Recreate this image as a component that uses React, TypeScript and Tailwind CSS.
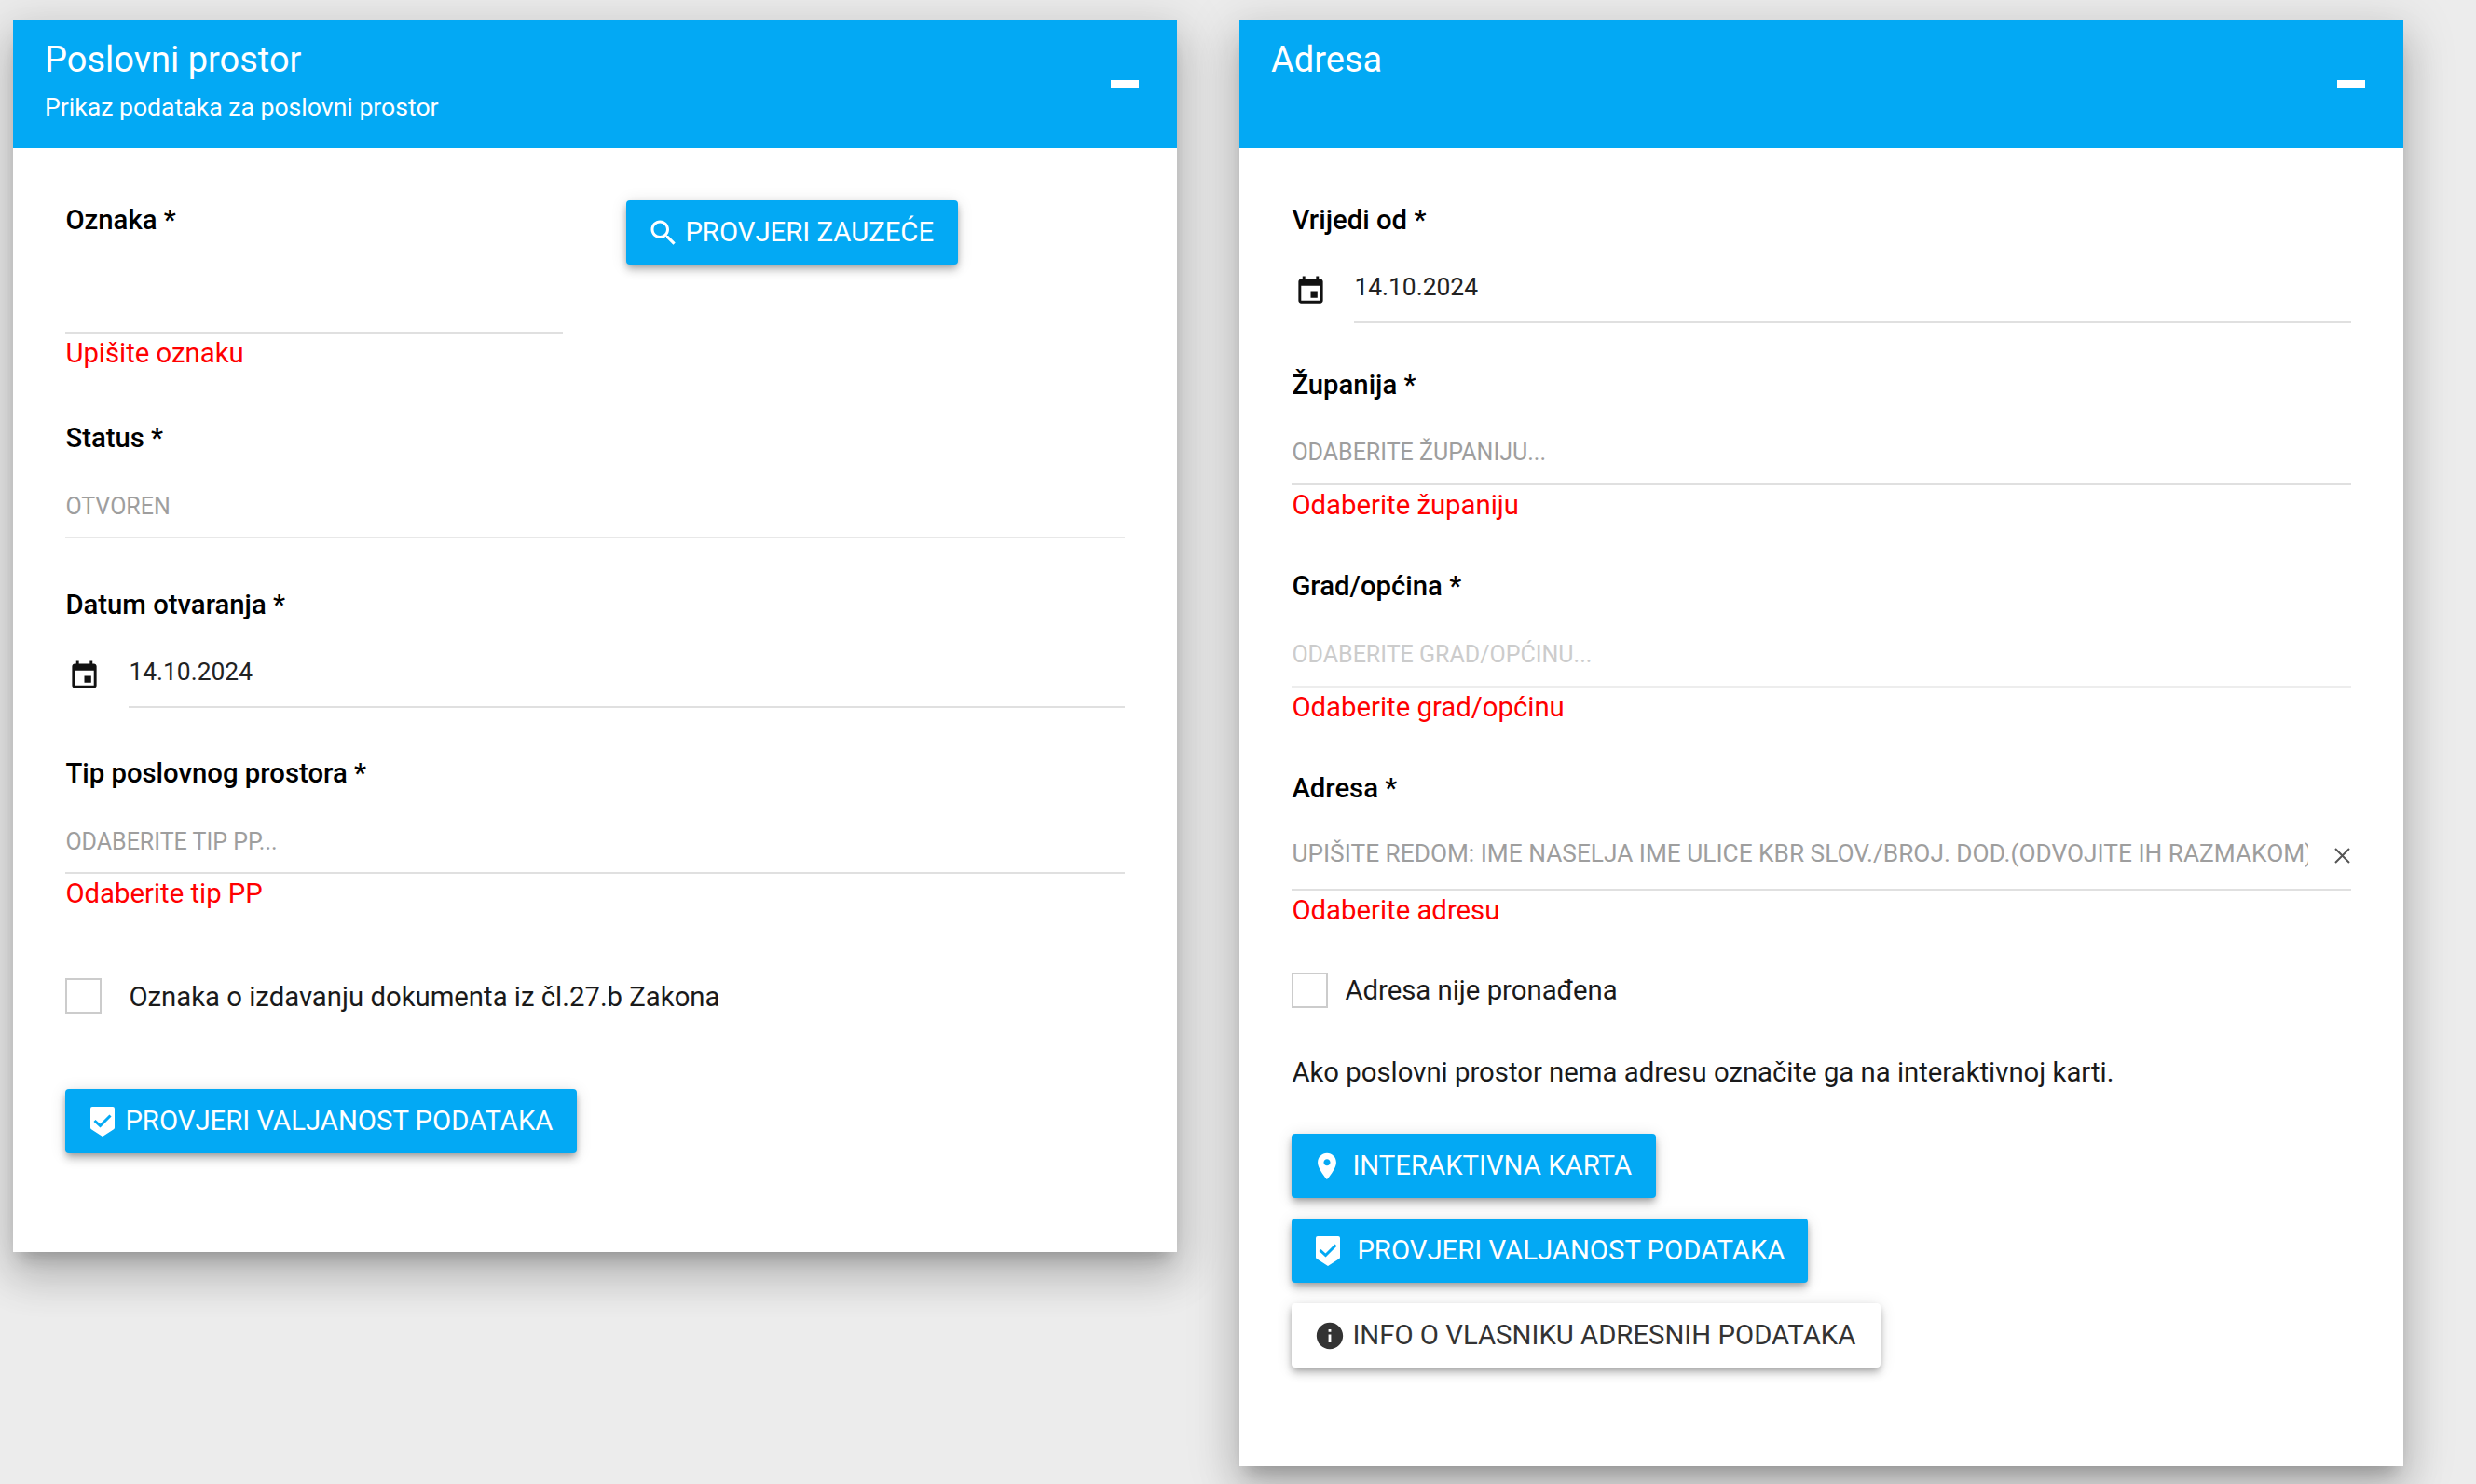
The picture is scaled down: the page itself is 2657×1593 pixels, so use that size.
import React from 'react';

const CARD_SHADOW = 'shadow-[0_27px_41px_3px_rgba(0,0,0,0.14),0_10px_51px_8px_rgba(0,0,0,0.12),0_14px_17px_-8px_rgba(0,0,0,0.2)]';
const BTN_SHADOW = 'shadow-[0_7px_8px_0_rgba(0,0,0,0.14),0_2px_17px_0_rgba(0,0,0,0.12),0_3px_7px_-2px_rgba(0,0,0,0.3)]';

const EventIcon = () => (
  <svg viewBox="0 0 24 24" className="h-[35px] w-[35px] fill-current">
    <path d="M17 12h-5v5h5v-5zM16 1v2H8V1H6v2H5c-1.11 0-1.99.9-1.99 2L3 19c0 1.1.89 2 2 2h14c1.1 0 2-.9 2-2V5c0-1.1-.9-2-2-2h-1V1h-2zm3 18H5V8h14v11z" />
  </svg>
);

const SearchIcon = () => (
  <svg viewBox="0 0 24 24" className="h-[36px] w-[36px] fill-current">
    <path d="M15.5 14h-.79l-.28-.27C15.41 12.59 16 11.11 16 9.5 16 5.91 13.09 3 9.5 3S3 5.91 3 9.5 5.91 16 9.5 16c1.61 0 3.09-.59 4.23-1.57l.27.28v.79l5 4.99L20.49 19l-4.99-5zm-6 0C7.01 14 5 11.99 5 9.5S7.01 5 9.5 5 14 7.01 14 9.5 11.99 14 9.5 14z" />
  </svg>
);

const PlaceIcon = () => (
  <svg viewBox="0 0 24 24" className="h-[34px] w-[34px] fill-current">
    <path d="M12 2C8.13 2 5 5.13 5 9c0 5.25 7 13 7 13s7-7.75 7-13c0-3.87-3.13-7-7-7zm0 9.5c-1.38 0-2.5-1.12-2.5-2.5s1.12-2.5 2.5-2.5 2.5 1.12 2.5 2.5-1.12 2.5-2.5 2.5z" />
  </svg>
);

const InfoIcon = () => (
  <svg viewBox="0 0 24 24" className="h-[34px] w-[34px] fill-current">
    <path d="M12 2C6.48 2 2 6.48 2 12s4.48 10 10 10 10-4.48 10-10S17.52 2 12 2zm1 15h-2v-6h2v6zm0-8h-2V7h2v2z" />
  </svg>
);

const ShieldIcon = () => (
  <svg viewBox="0 0 26 32" className="h-[32px] w-[26px]">
    <path d="M2 0h22a2 2 0 0 1 2 2v20.5a2 2 0 0 1-1 1.7L13 32 1 24.2a2 2 0 0 1-1-1.7V2a2 2 0 0 1 2-2z" fill="#fff" />
    <path d="M4.5 15l6 5.5L21.5 9.5" fill="none" stroke="#03a9f4" strokeWidth="3" />
  </svg>
);

const Label = ({ children, className = '' }: { children: React.ReactNode; className?: string }) => (
  <div className={`h-[40px] text-[29.3px] font-medium leading-[40px] text-black ${className}`}>{children}</div>
);

const ErrorText = ({ children }: { children: React.ReactNode }) => (
  <div className="mt-px h-[40px] text-[29.3px] leading-[40px] text-[#ff0000]">{children}</div>
);

const Checkbox = () => <div className="h-[38px] w-[39px] shrink-0 border-2 border-[#cccccc] bg-white" />;

const Card = ({ title, subtitle, children }: { title: string; subtitle?: string; children: React.ReactNode }) => (
  <section className={`w-[1249px] shrink-0 bg-white ${CARD_SHADOW}`}>
    <header className="flex h-[137px] items-center justify-between bg-[#03a9f4] pl-[34px] pr-[41px] text-white">
      <div className="self-start pt-[20px]">
        <h2 className="text-[38px] font-normal leading-[44px]">{title}</h2>
        {subtitle && <p className="mt-[9px] text-[26.6px] leading-[40px]">{subtitle}</p>}
      </div>
      <div className="mb-[2px] h-[8px] w-[30px] bg-white" />
    </header>
    <div className="pb-[106px] pl-[56.4px] pr-[55.6px] pt-[57px]">{children}</div>
  </section>
);

const Button = ({ children, light, className = '' }: { children: React.ReactNode; light?: boolean; className?: string }) => (
  <button
    type="button"
    className={`flex h-[69px] items-center rounded-[4px] text-[29.3px] leading-none ${BTN_SHADOW} ${light ? 'bg-white text-[#333333]' : 'bg-[#03a9f4] text-white'} ${className}`}
  >
    {children}
  </button>
);

export default function App() {
  return (
    <div className="flex min-h-[1593px] items-start gap-[67px] bg-[#ececec] pl-[14px] pt-[22px] font-['Roboto',sans-serif]">
      <Card title="Poslovni prostor" subtitle="Prikaz podataka za poslovni prostor">
        <div className="flex">
          <div className="w-[534px]">
            <Label>Oznaka *</Label>
            <div className="h-[102px] border-b-2 border-[#e0e0e0]" />
          </div>
          <div className="ml-[68px] -mt-px">
            <Button className="w-[356px] pl-[22px]">
              <SearchIcon />
              <span className="ml-[5px]">PROVJERI ZAUZEĆE</span>
            </Button>
          </div>
        </div>
        <ErrorText>Upišite oznaku</ErrorText>

        <Label className="mt-[51px]">Status *</Label>
        <div className="border-b-2 border-[#e8e8e8] pb-[12px] pt-[34px] text-[25px] leading-[40px] text-[#9e9e9e]">OTVOREN</div>

        <Label className="mt-[51px]">Datum otvaranja *</Label>
        <div className="flex">
          <div className="flex w-[68px] items-end pb-[17px] pl-[3px] text-[#111111]">
            <EventIcon />
          </div>
          <div className="flex-1 border-b-2 border-[#e0e0e0] pb-[17px] pt-[32px] text-[26.4px] leading-[40px] text-[#222222]">14.10.2024</div>
        </div>

        <Label className="mt-[50px]">Tip poslovnog prostora *</Label>
        <div className="border-b-2 border-[#e0e0e0] pb-[12px] pt-[34px] text-[25px] leading-[40px] text-[#9e9e9e]">ODABERITE TIP PP...</div>
        <ErrorText>Odaberite tip PP</ErrorText>

        <div className="mt-[69px] flex items-center gap-[29px]">
          <Checkbox />
          <span className="pt-[2px] text-[29.3px] leading-[40px] text-[#1a1a1a]">Oznaka o izdavanju dokumenta iz čl.27.b Zakona</span>
        </div>

        <Button className="mt-[79px] w-[549px] pl-[27px]">
          <ShieldIcon />
          <span className="ml-[11px]">PROVJERI VALJANOST PODATAKA</span>
        </Button>
      </Card>

      <Card title="Adresa">
        <Label>Vrijedi od *</Label>
        <div className="flex">
          <div className="flex w-[67px] items-end pb-[17px] pl-[3px] text-[#111111]">
            <EventIcon />
          </div>
          <div className="flex-1 border-b-2 border-[#e0e0e0] pb-[17px] pt-[32px] text-[26.4px] leading-[40px] text-[#222222]">14.10.2024</div>
        </div>

        <Label className="mt-[46px]">Županija *</Label>
        <div className="border-b-2 border-[#e0e0e0] pb-[13px] pt-[33px] text-[25px] leading-[40px] text-[#9e9e9e]">ODABERITE ŽUPANIJU...</div>
        <ErrorText>Odaberite županiju</ErrorText>

        <Label className="mt-[47px]">Grad/općina *</Label>
        <div className="border-b-2 border-[#ededed] pb-[13px] pt-[34px] text-[25px] leading-[40px] text-[#cccccc]">ODABERITE GRAD/OPĆINU...</div>
        <ErrorText>Odaberite grad/općinu</ErrorText>

        <Label className="mt-[47px]">Adresa *</Label>
        <div className="flex items-center border-b-2 border-[#e0e0e0] pb-[18px] pt-[30px]">
          <div className="w-[1091px] overflow-hidden whitespace-nowrap text-[26.25px] leading-[40px] text-[#9e9e9e]">
            UPIŠITE REDOM: IME NASELJA IME ULICE KBR SLOV./BROJ. DOD.(ODVOJITE IH RAZMAKOM)
          </div>
          <svg viewBox="0 0 17 17" className="ml-[28px] mt-[5px] h-[17px] w-[17px] stroke-[#555555]" strokeWidth="2" fill="none">
            <path d="M1 1l15 15M16 1L1 16" />
          </svg>
        </div>
        <ErrorText>Odaberite adresu</ErrorText>

        <div className="mt-[46px] flex items-center gap-[18px]">
          <Checkbox />
          <span className="text-[29.3px] leading-[40px] text-[#1a1a1a]">Adresa nije pronađena</span>
        </div>

        <p className="mt-[48px] text-[29.3px] leading-[40px] text-[#1a1a1a]">Ako poslovni prostor nema adresu označite ga na interaktivnoj karti.</p>

        <Button className="mt-[46px] w-[391px] pl-[21px]">
          <PlaceIcon />
          <span className="ml-[10px]">INTERAKTIVNA KARTA</span>
        </Button>
        <Button className="mt-[22px] w-[554px] pl-[26px]">
          <ShieldIcon />
          <span className="ml-[18px]">PROVJERI VALJANOST PODATAKA</span>
        </Button>
        <Button light className="mt-[22px] w-[632px] pl-[24px]">
          <InfoIcon />
          <span className="ml-[7px]">INFO O VLASNIKU ADRESNIH PODATAKA</span>
        </Button>
      </Card>
    </div>
  );
}
